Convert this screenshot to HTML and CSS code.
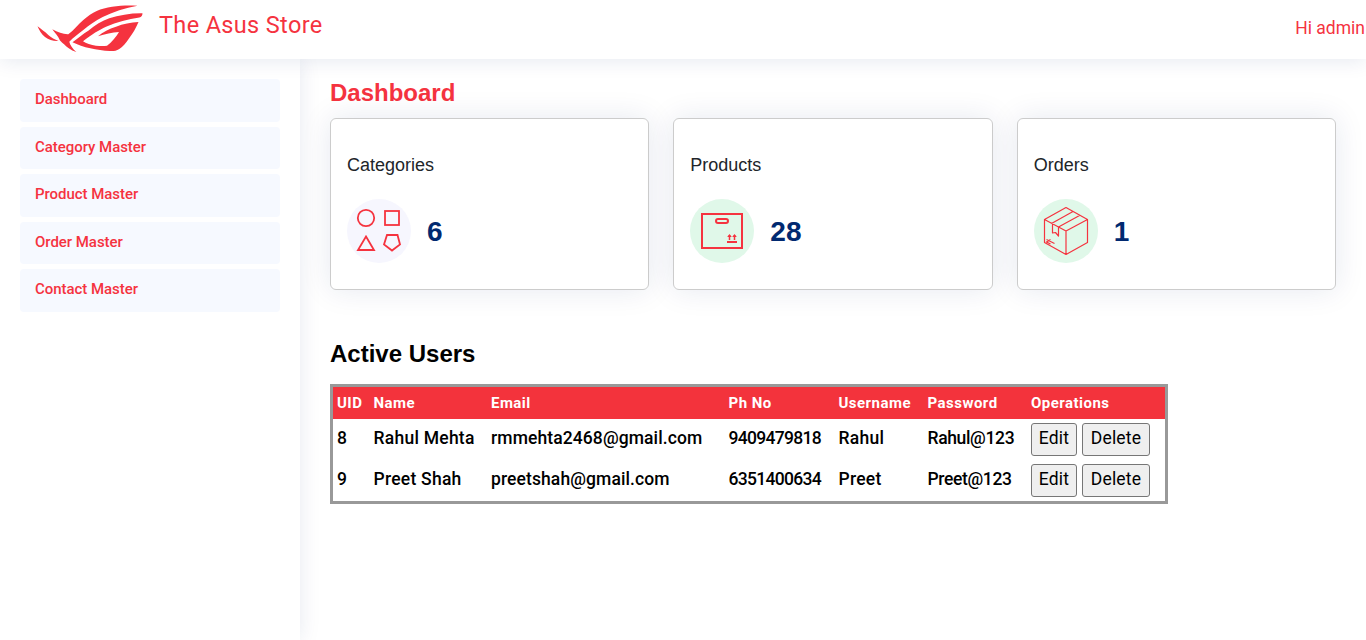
FILE: index.html
```
<!DOCTYPE html>
<html lang="en">
<head>
<meta charset="utf-8">
<title>The Asus Store</title>
<link rel="stylesheet" href="styles.css">
</head>
<body>
<header class="header">
  <svg class="logo" width="108" height="52" viewBox="0 0 108 52">
    <g fill="#f5333f">
      <path d="M0.500 22.200C4 25 8 27.500 11.300 31C14 33.500 18 35.500 21.500 37C17 37.500 12 36 8 33C4.500 30 2 26 0.500 22.200Z"/>
      <path d="M15.300 25.300C21 28 26 30.500 31.300 30.300C37 26 41 20.500 46.300 16C51 12 55 9 59.700 7C71 2 87 1 100.500 1.800C88 4 76 8 65.700 13C58 17 52 21 46.300 26C41 30 36 34 32.300 37.700C33 41 35.500 44.500 39.300 48C34 46.500 29 42.500 23 36.500C21 32 18 29 15.300 25.300Z"/>
      <path fill-rule="evenodd" d="M35.500 38.300C41 34 46 30 51.300 26.700C58 21 65 17 72.300 14.300C82 11 94 9 105.500 9.200C105.500 11.500 104.500 13 102.300 13.500C91 15 80 18 69 22.700C62 26 55 30 46 37.300C49 39.500 54 41 59 41.700C63 42.200 67 42.200 70 41.800C75 38 79 33 82 28C75 28.500 68 30 61 32.300C66 28 72 25 79 22.700C86 20 94 18.300 101.500 18C99 24 96 29 92.300 34C89 39 86 42.500 82.300 45C79 47 76 47.300 73 47C60 46.500 46 43.500 35.500 38.300Z"/>
    </g>
  </svg>
  <span class="brand">The Asus Store</span>
  <span class="greeting">Hi admin</span>
</header>
<div class="layout">
  <nav class="sidebar">
    <a class="nav-item">Dashboard</a>
    <a class="nav-item">Category Master</a>
    <a class="nav-item">Product Master</a>
    <a class="nav-item">Order Master</a>
    <a class="nav-item">Contact Master</a>
  </nav>
  <main class="main">
    <h1 class="page-title">Dashboard</h1>
    <section class="cards">
      <article class="card">
        <h2 class="card-title">Categories</h2>
        <div class="card-body">
          <span class="card-icon card-icon-lilac">
            <svg width="64" height="64" viewBox="0 0 64 64" fill="none" stroke="#f5333f" stroke-width="1.800">
              <circle cx="19" cy="19" r="8.200"/><rect x="38" y="12" width="14" height="14"/>
              <path d="M19 37.500L27 51H11ZM40 36H50.500L53 45.500L45 51.500L37 45.500Z"/>
            </svg>
          </span>
          <span class="card-value">6</span>
        </div>
      </article>
      <article class="card">
        <h2 class="card-title">Products</h2>
        <div class="card-body">
          <span class="card-icon card-icon-green">
            <svg width="64" height="64" viewBox="0 0 64 64" fill="none" stroke="#f5333f" stroke-width="2">
              <rect x="12" y="15" width="40" height="34"/><rect x="26" y="20" width="12" height="4" rx="2"/>
              <path d="M37 43H47"/><path d="M39.500 41V36M44.500 41V36" stroke-width="1.500"/>
              <path d="M37.200 38L39.500 35L41.800 38ZM42.200 38L44.500 35L46.800 38Z" fill="#f5333f" stroke="none"/>
            </svg>
          </span>
          <span class="card-value">28</span>
        </div>
      </article>
      <article class="card">
        <h2 class="card-title">Orders</h2>
        <div class="card-body">
          <span class="card-icon card-icon-green">
            <svg width="64" height="64" viewBox="0 0 64 64" fill="none" stroke="#f5333f" stroke-width="1.200" stroke-linejoin="round">
              <path d="M32 8.500L53.500 20.500V43.500L32 55.500L10.500 43.500V20.500ZM10.500 20.500L32 32L53.500 20.500M32 32V55.500M17.500 24.500L39 12.500M24.500 28L46 16.200M18.500 25V34L21.500 33.500L24.500 37V28M12.500 40.500L20.500 44.500M16.500 40.500L12.500 43L16.500 45"/>
            </svg>
          </span>
          <span class="card-value">1</span>
        </div>
      </article>
    </section>
    <h2 class="section-title">Active Users</h2>
    <table class="users">
      <colgroup><col class="c-uid"><col class="c-name"><col class="c-email"><col class="c-phone"><col class="c-user"><col class="c-pass"><col class="c-ops"></colgroup>
      <thead><tr><th>UID</th><th>Name</th><th>Email</th><th>Ph No</th><th>Username</th><th>Password</th><th>Operations</th></tr></thead>
      <tbody>
        <tr><td>8</td><td class="name">Rahul Mehta</td><td class="email">rmmehta2468@gmail.com</td><td class="phone">9409479818</td><td class="name">Rahul</td><td class="password">Rahul@123</td><td><div class="ops"><button class="btn btn-edit">Edit</button><button class="btn btn-delete">Delete</button></div></td></tr>
        <tr><td>9</td><td class="name">Preet Shah</td><td class="email">preetshah@gmail.com</td><td class="phone">6351400634</td><td class="name">Preet</td><td class="password">Preet@123</td><td><div class="ops"><button class="btn btn-edit">Edit</button><button class="btn btn-delete">Delete</button></div></td></tr>
      </tbody>
    </table>
  </main>
</div>
</body>
</html>
```
FILE: styles.css
```
* { box-sizing: border-box; }
body { margin: 0; background: #fff; font-family: Roboto, "Liberation Sans", sans-serif; height: 640px; overflow: hidden; display: flex; flex-direction: column; }
.header { height: 59px; flex: none; display: flex; align-items: flex-start; padding: 4px 1px 0 37px; background: #fff; color: #f5333f; box-shadow: 0 2px 20px rgba(1, 41, 112, .1); position: relative; z-index: 2; }
.logo { display: block; }
.brand { margin-left: 14px; font-size: 23.5px; letter-spacing: .35px; line-height: 28px; padding-top: 7px; }
.greeting { margin-left: auto; font-size: 17.5px; line-height: 24px; padding-top: 12px; }
.layout { flex: 1; display: flex; }
.sidebar { width: 300px; padding: 20px; display: flex; flex-direction: column; gap: 5px; box-shadow: 0 0 20px rgba(1, 41, 112, .1); }
.nav-item { height: 42.5px; padding: 10px 15px; border-radius: 4px; background: #f6f9ff; color: #f5333f; font-size: 15px; font-weight: 500; line-height: 20px; letter-spacing: -.04px; }
.main { flex: 1; padding: 19px 30px; }
.page-title { margin: 0 0 11px; font: bold 24px/29px "Liberation Sans", Arial, sans-serif; color: #f5333f; }
.cards { display: grid; grid-template-columns: repeat(3, 1fr); gap: 24px; }
.card { height: 172px; padding: 35px 16px 0; border: 1px solid #ccc; border-radius: 6px; background: #fff; box-shadow: 0 0 30px rgba(1, 41, 112, .1); }
.card-title { margin: 0; font: 18px/22px "Liberation Sans", Arial, sans-serif; color: #212529; }
.card-body { display: flex; align-items: center; gap: 16px; margin-top: 23px; }
.card-icon { width: 64px; height: 64px; border-radius: 50%; flex: none; }
.card-icon svg { display: block; }
.card-icon-lilac { background: #f6f6fe; }
.card-icon-green { background: #e0f8e9; }
.card-value { padding-top: 2px; font: bold 28px/32px "Liberation Sans", Arial, sans-serif; color: #012970; }
.section-title { margin: 50px 0 16px; font: bold 24px/28px "Liberation Sans", Arial, sans-serif; color: #000; }
.users { width: 838px; table-layout: fixed; border-collapse: separate; border-spacing: 0; border: 3px solid #999; }
.c-uid { width: 36.5px; } .c-name { width: 117.5px; } .c-email { width: 237.5px; } .c-phone { width: 110px; } .c-user { width: 89px; } .c-pass { width: 103.5px; } .c-ops { width: 138px; }
.users th { height: 32px; padding: 0 4px; background: #f3333c; color: #fff; font-size: 15px; font-weight: 700; text-align: left; letter-spacing: .47px; }
.users td { height: 41px; padding: 4px; color: #000; font-size: 17.5px; font-weight: 500; line-height: 31px; vertical-align: top; white-space: nowrap; }
.users .name { letter-spacing: .25px; }
.users .email { letter-spacing: .1px; }
.users .phone { letter-spacing: -.7px; }
.users .password { letter-spacing: -.35px; }
.ops { display: flex; gap: 5px; }
.btn { height: 33px; padding: 0 0 3px; border: 1px solid #767676; border-radius: 3px; background: #efefef; color: #000; font: 17.5px/28px Roboto, sans-serif; letter-spacing: .2px; }
.btn-edit { width: 46px; } .btn-delete { width: 68px; }
```
